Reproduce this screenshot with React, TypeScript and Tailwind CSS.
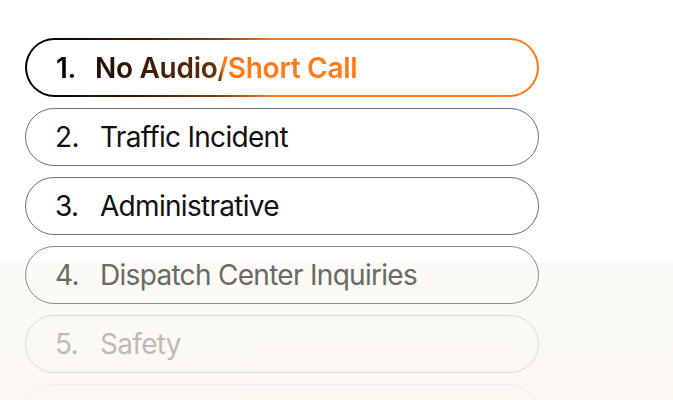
import React from "react";

const items = [
  { n: "2.", label: "Traffic Incident", text: "text-[#111111]", border: "border-[#6f6f6f]" },
  { n: "3.", label: "Administrative", text: "text-[#111111]", border: "border-[#6f6f6f]" },
  { n: "4.", label: "Dispatch Center Inquiries", text: "text-[#6b6964]", border: "border-[#8a8a8a]" },
  { n: "5.", label: "Safety", text: "text-[#bdbab4]", border: "border-[#dcdad5]" },
  { n: "", label: "", text: "text-[#f1efe9]", border: "border-[#f0eee9]" },
];

export default function App() {
  return (
    <div
      className="relative h-[400px] w-[673px] overflow-hidden bg-white"
      style={{ fontFamily: "Inter, 'Noto Sans', sans-serif" }}
    >
      <div className="absolute inset-x-0 top-[262px] bottom-0 bg-gradient-to-b from-[#fcfaf5] to-[#fbf8f2]" />
      <div className="relative ml-[25px] flex w-[514px] flex-col gap-[11px] pt-[38px]">
        <div className="h-[59px] rounded-full bg-[linear-gradient(90deg,#000000_0%,#3a1a05_22%,#8a400e_38%,#ff7a17_48%,#ff7a17_100%)] p-[2px]">
          <div className="flex h-full items-center rounded-full bg-white pl-[29px]">
            <span className="bg-[linear-gradient(90deg,#000000_0%,#2a1204_20%,#5a2a0a_48%,#6e360f_54.5%,#ff7a17_55.5%,#ff7a17_100%)] bg-clip-text text-[28px] font-semibold tracking-[-0.01em] text-transparent">
              <span className="inline-block w-[39px]">1.</span>No Audio/Short Call
            </span>
          </div>
        </div>
        {items.map((it, i) => (
          <div
            key={i}
            className={`flex h-[58px] items-center rounded-full border ${it.border} pl-[29px]`}
          >
            <span className={`text-[28px] tracking-[-0.025em] ${it.text}`}>
              <span className="inline-block w-[45px]">{it.n}</span>
              {it.label}
            </span>
          </div>
        ))}
      </div>
    </div>
  );
}
